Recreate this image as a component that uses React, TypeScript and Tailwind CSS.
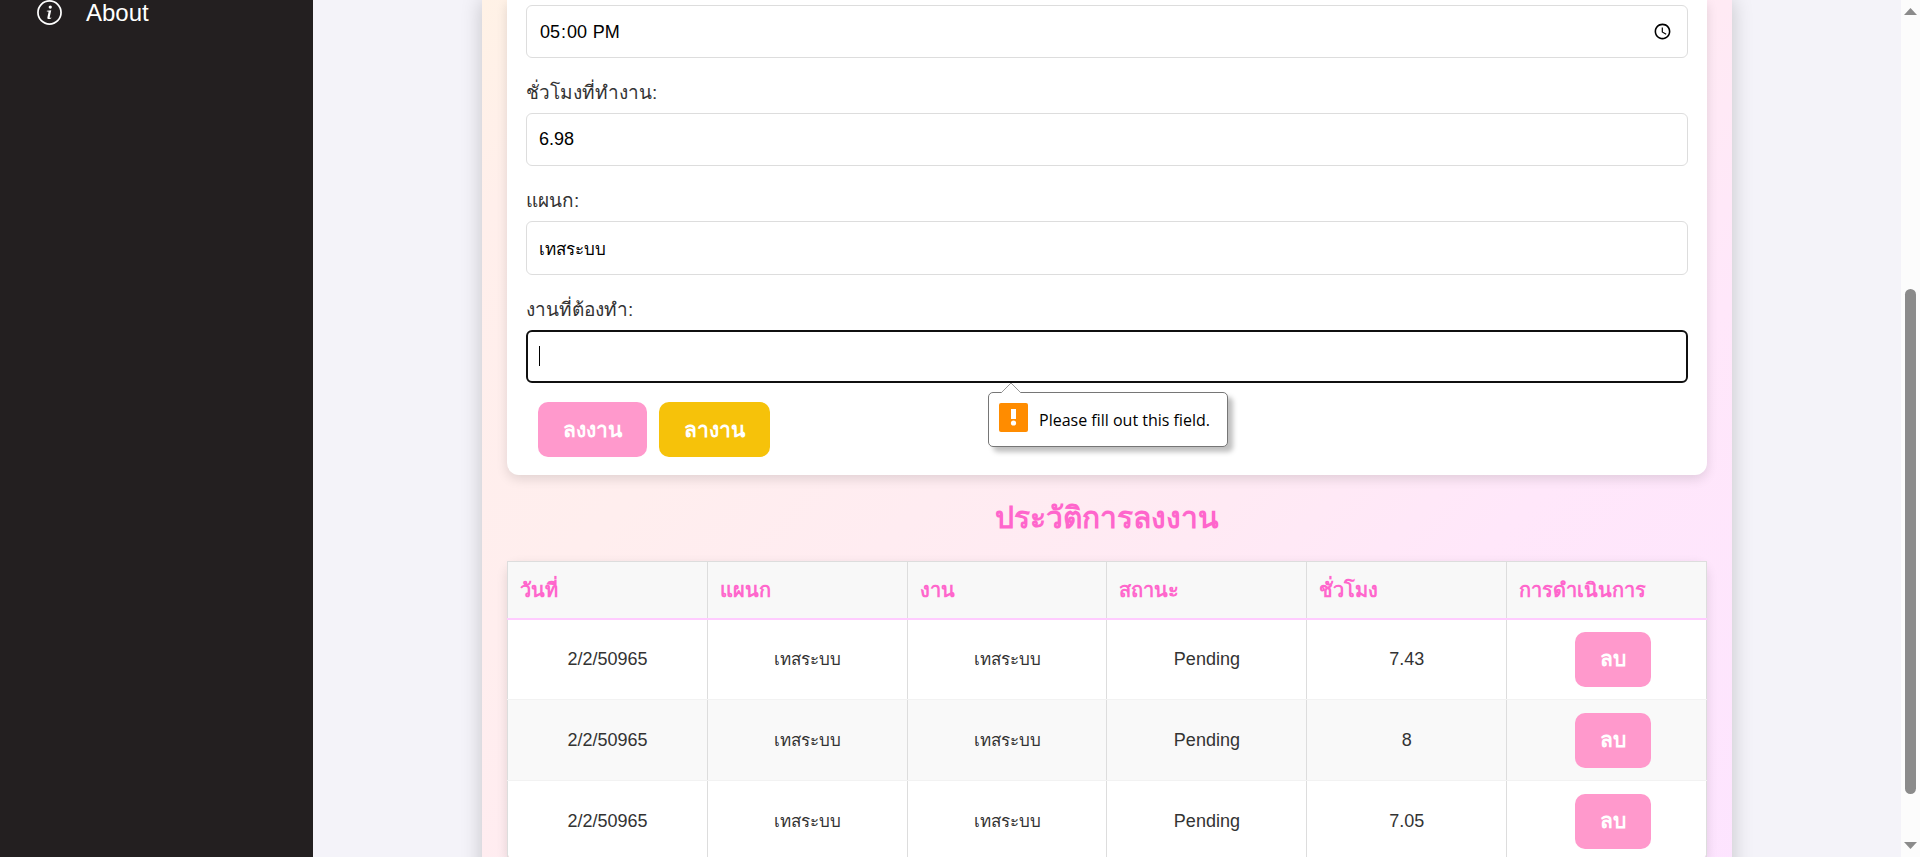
import { ReactNode } from "react";

const columns = ["วันที่", "แผนก", "งาน", "สถานะ", "ชั่วโมง", "การดำเนินการ"];

const rows = [
  { date: "2/2/50965", department: "เทสระบบ", task: "เทสระบบ", status: "Pending", hours: "7.43" },
  { date: "2/2/50965", department: "เทสระบบ", task: "เทสระบบ", status: "Pending", hours: "8" },
  { date: "2/2/50965", department: "เทสระบบ", task: "เทสระบบ", status: "Pending", hours: "7.05" },
];

const numberInput =
  "block h-[53px] w-full rounded-md border border-[#ddd] bg-white px-3 text-lg text-black outline-none";
const textInput =
  "block h-[54px] w-full rounded-md border border-[#ddd] bg-white px-3 text-[17px] text-black outline-none";

const cell = "border-x border-b border-x-[#ddd] border-b-[#f2f2f2] text-center text-[#333]";

function Sidebar() {
  return (
    <nav className="w-[313px] shrink-0 bg-[#231f20]">
      <a href="#about" className="flex items-start pl-[37px] text-white">
        <svg viewBox="0 0 26 26" className="size-[25px]" fill="none" aria-hidden="true">
          <circle cx="13" cy="13" r="12" stroke="currentColor" strokeWidth="1.8" />
          <circle cx="13.8" cy="7.4" r="1.7" fill="currentColor" />
          <path
            d="M10.2 11.2 14.8 10.7 13.2 18C13.1 18.8 13.6 18.8 14.8 18.1L15 18.6C13.4 20.2 10.4 20.6 10.8 18.1L12 12.4C12.1 11.9 11.4 11.9 10.2 11.9Z"
            fill="currentColor"
          />
        </svg>
        <span className="ml-6 text-2xl leading-[26px]">About</span>
      </a>
    </nav>
  );
}

function Field({ id, label, children }: { id: string; label: string; children: ReactNode }) {
  return (
    <div className="mb-4 flex flex-col">
      <label htmlFor={id} className="mb-0.5 text-[19px] leading-[37px] text-[#333]">
        {label}
      </label>
      {children}
    </div>
  );
}

function ValidationBubble() {
  return (
    <div
      role="alert"
      className="absolute top-full left-1/2 mt-[9px] -ml-[119px] flex h-[55px] w-[240px] items-center rounded-[5px] border border-[#767676] bg-white pl-[10px] shadow-[5px_5px_5px_rgba(0,0,0,0.25)]"
    >
      <svg viewBox="0 0 22 12" className="absolute -top-[11px] left-[11px] h-3 w-[22px]" aria-hidden="true">
        <path d="M1 11 11 1 21 11V12H1Z" fill="#fff" />
        <path d="M1 11 11 1 21 11" fill="none" stroke="#999" strokeWidth="1" />
      </svg>
      <svg viewBox="0 0 29 29" className="-mt-1 size-[29px] shrink-0" aria-hidden="true">
        <rect width="29" height="29" rx="2" fill="#ff8c00" />
        <rect x="12" y="6" width="5" height="10" fill="#fff" />
        <circle cx="14.5" cy="20" r="2.6" fill="#fff" />
      </svg>
      <span className="ml-[11px] font-['Open_Sans','Noto_Sans',sans-serif] text-base whitespace-nowrap text-black">
        Please fill out this field.
      </span>
    </div>
  );
}

function ActionButton({ children, tone = "pink" }: { children: ReactNode; tone?: "pink" | "yellow" }) {
  return (
    <button
      type="button"
      className={
        tone === "pink"
          ? "h-[55px] rounded-[10px] bg-[#ff99cc] px-[25px] text-[21px] leading-6 font-bold text-white"
          : "h-[55px] rounded-[10px] bg-[#f6c20a] px-[25px] text-[21px] leading-6 font-bold text-white"
      }
    >
      {children}
    </button>
  );
}

function WorkForm() {
  return (
    <form className="rounded-b-xl bg-white px-[19px] pt-[5px] pb-[18px] shadow-[0_4px_12px_rgba(0,0,0,0.12)]">
      <div className="mb-4">
        <input id="end" aria-label="เวลาเลิกงาน" type="time" defaultValue="17:00" className={numberInput} />
      </div>
      <Field id="hours" label="ชั่วโมงที่ทำงาน:">
        <input id="hours" defaultValue="6.98" className={numberInput} />
      </Field>
      <Field id="department" label="แผนก:">
        <input id="department" defaultValue="เทสระบบ" className={textInput} />
      </Field>
      <Field id="task" label="งานที่ต้องทำ:">
        <div className="relative">
          <input
            id="task"
            required
            className="block h-[53px] w-full rounded-md border-2 border-[#101010] bg-white px-[11px] text-[17px] text-black caret-transparent outline-none"
          />
          <span className="absolute top-4 left-[13px] h-5 w-px bg-black" />
          <ValidationBubble />
        </div>
      </Field>
      <div className="mt-[19px] flex gap-3 pl-3">
        <ActionButton>ลงงาน</ActionButton>
        <ActionButton tone="yellow">ลางาน</ActionButton>
      </div>
    </form>
  );
}

function HistoryTable() {
  return (
    <table className="w-full table-fixed border-collapse rounded-xl bg-white shadow-[0_4px_12px_rgba(0,0,0,0.12)]">
      <thead>
        <tr className="h-[57px] bg-[#f8f8f8]">
          {columns.map((c) => (
            <th
              key={c}
              className="border border-b-2 border-[#ddd] border-b-[#fcf] px-3 text-left text-xl leading-6 font-bold text-[#ff66cc]"
            >
              {c}
            </th>
          ))}
        </tr>
      </thead>
      <tbody>
        {rows.map((r, i) => (
          <tr key={i} className="h-[81px] text-lg even:bg-[#f9f9f9]">
            <td className={cell}>{r.date}</td>
            <td className={cell}>
              <span className="text-[17px]">{r.department}</span>
            </td>
            <td className={cell}>
              <span className="text-[17px]">{r.task}</span>
            </td>
            <td className={cell}>{r.status}</td>
            <td className={cell}>{r.hours}</td>
            <td className="border-x border-b border-x-[#ddd] border-b-[#f2f2f2] pl-3 text-center">
              <ActionButton>ลบ</ActionButton>
            </td>
          </tr>
        ))}
      </tbody>
    </table>
  );
}

function ScrollBar() {
  return (
    <div className="flex w-[19px] shrink-0 flex-col items-center bg-[#fcfcfc] pt-2 pb-2" aria-hidden="true">
      <svg viewBox="0 0 13 7" className="h-[7px] w-[13px] shrink-0" fill="#8b8b8b">
        <path d="M0 7 6.5 0 13 7Z" />
      </svg>
      <div className="flex w-[11px] flex-1 flex-col pt-[34px]">
        <div className="flex-[240]" />
        <div className="flex-[505] rounded-full bg-[#8b8b8b]" />
        <div className="flex-[48]" />
      </div>
      <svg viewBox="0 0 13 7" className="h-[7px] w-[13px] shrink-0" fill="#8b8b8b">
        <path d="M0 0 6.5 7 13 0Z" />
      </svg>
    </div>
  );
}

export default function App() {
  return (
    <div className="flex h-screen overflow-hidden bg-[#f4f3f9] font-['Liberation_Sans',Arial,sans-serif]">
      <Sidebar />
      <main className="flex min-w-0 flex-1 items-start justify-center">
        <section className="w-full max-w-[1250px] bg-[linear-gradient(135deg,#fff2e6_0%,#ffefeb_10%,#ffeeee_30%,#ffeaf4_58%,#ffe7fa_72%,#fde4ff_100%)] px-[25px] pb-10 shadow-[0_0_20px_rgba(0,0,0,0.2)]">
          <WorkForm />
          <h2 className="py-6 text-center text-[30px] leading-[38px] font-bold text-[#ff66cc]">ประวัติการลงงาน</h2>
          <HistoryTable />
        </section>
      </main>
      <ScrollBar />
    </div>
  );
}
